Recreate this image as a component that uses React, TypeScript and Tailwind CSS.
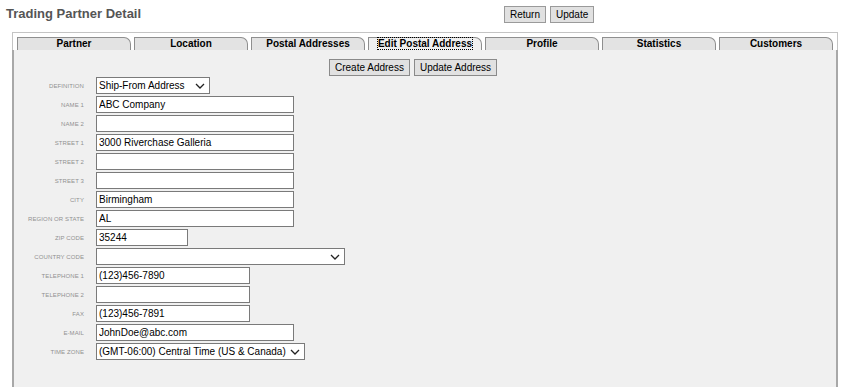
import React from 'react';

const tabs = ['Partner', 'Location', 'Postal Addresses', 'Edit Postal Address', 'Profile', 'Statistics', 'Customers'];

type Row = { label: string; value?: string; w: string; select?: boolean };

const rows: Row[] = [
  { label: 'Definition', value: 'Ship-From Address', w: 'w-[114px]', select: true },
  { label: 'Name 1', value: 'ABC Company', w: 'w-[198px]' },
  { label: 'Name 2', w: 'w-[198px]' },
  { label: 'Street 1', value: '3000 Riverchase Galleria', w: 'w-[198px]' },
  { label: 'Street 2', w: 'w-[198px]' },
  { label: 'Street 3', w: 'w-[198px]' },
  { label: 'City', value: 'Birmingham', w: 'w-[198px]' },
  { label: 'Region or State', value: 'AL', w: 'w-[198px]' },
  { label: 'Zip Code', value: '35244', w: 'w-[92px]' },
  { label: 'Country Code', value: '', w: 'w-[249px]', select: true },
  { label: 'Telephone 1', value: '(123)456-7890', w: 'w-[154px]' },
  { label: 'Telephone 2', w: 'w-[154px]' },
  { label: 'Fax', value: '(123)456-7891', w: 'w-[154px]' },
  { label: 'E-Mail', value: 'JohnDoe@abc.com', w: 'w-[198px]' },
  { label: 'Time Zone', value: '(GMT-06:00) Central Time (US & Canada)', w: 'w-[209px]', select: true },
];

const Chevron = () => (
  <svg width="10" height="6" viewBox="0 0 10 6" className="absolute right-[4px] top-[5px] pointer-events-none">
    <path d="M1 1 L5 5 L9 1" fill="none" stroke="#222" strokeWidth="1.3" />
  </svg>
);

const Field = ({ row }: { row: Row }) => {
  if (row.select) {
    return (
      <div className={`relative h-[17px] ${row.w} border border-[#7a7a7a] bg-white`}>
        <div className="pl-[2px] leading-[15px] text-[10px] text-black whitespace-nowrap overflow-hidden">{row.value}</div>
        <Chevron />
      </div>
    );
  }
  return (
    <input
      readOnly
      value={row.value ?? ''}
      className={`block h-[17px] ${row.w} border border-[#7a7a7a] bg-white px-[2px] text-[10px] leading-[15px] text-black outline-none`}
    />
  );
};

const App = () => {
  return (
    <div className="w-[841px] h-[387px] overflow-hidden bg-white font-['Liberation_Sans',Arial,sans-serif]">
      <div className="flex items-center h-[28px]">
        <h1 className="ml-[6px] text-[13px] font-bold text-[#555] w-[498px]">Trading Partner Detail</h1>
        <div className="flex gap-[4px]">
          <button className="h-[17px] px-[5px] border border-[#9a9a9a] bg-[#e1e1e1] text-[10px] text-black leading-[15px]">Return</button>
          <button className="h-[17px] px-[5px] border border-[#9a9a9a] bg-[#e1e1e1] text-[10px] text-black leading-[15px]">Update</button>
        </div>
      </div>

      <div className="ml-[12px] mt-[4px] w-[826px] border-t border-l border-r border-[#c4c4c4]">
        <div className="flex gap-[3px] pl-[4px] pt-[4px]">
          {tabs.map((t, i) => (
            <div
              key={t}
              className={`w-[112px] h-[12px] box-content border-t border-l border-r border-[#8f8f8f] rounded-tr-[7px] text-center text-[10px] font-bold leading-[12px] text-black ${i === 3 ? 'bg-[#f0f0f0]' : 'bg-[#e3e3e3]'}`}
            >
              <span className={i === 3 ? 'outline-1 outline-dotted outline-black' : ''}>{t}</span>
            </div>
          ))}
        </div>
        <div className="h-[340px] bg-[#f0f0f0] border-l-2 border-r-2 border-[#a8a8a8] -mx-px">
          <div className="flex gap-[4px] pt-[9px] pl-[315px]">
            <button className="h-[17px] px-[5px] border border-[#8a8a8a] bg-[#e1e1e1] text-[10px] leading-[15px] text-black">Create Address</button>
            <button className="h-[17px] px-[5px] border border-[#8a8a8a] bg-[#e1e1e1] text-[10px] leading-[15px] text-black">Update Address</button>
          </div>
          <div className="flex flex-col gap-[2px] mt-[1px]">
            {rows.map((r) => (
              <div key={r.label} className="flex items-center h-[17px]">
                <div className="w-[70px] text-right text-[6px] leading-[8px] uppercase text-[#909090] tracking-[0.1px]">{r.label}</div>
                <div className="ml-[12px] flex">
                  <Field row={r} />
                </div>
              </div>
            ))}
          </div>
        </div>
      </div>
    </div>
  );
};

export default App;
